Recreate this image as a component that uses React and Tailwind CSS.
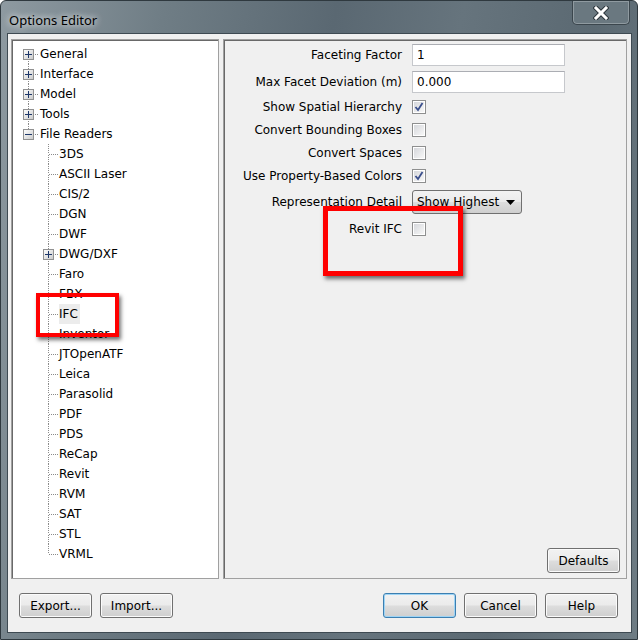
import React from "react";

const topItems = ["General", "Interface", "Model", "Tools"];
const readers = [
  "3DS",
  "ASCII Laser",
  "CIS/2",
  "DGN",
  "DWF",
  "DWG/DXF",
  "Faro",
  "FBX",
  "IFC",
  "Inventor",
  "JTOpenATF",
  "Leica",
  "Parasolid",
  "PDF",
  "PDS",
  "ReCap",
  "Revit",
  "RVM",
  "SAT",
  "STL",
  "VRML",
];

const font = "font-['DejaVu_Sans',sans-serif] text-[12px]";

// dotted tree connector, 20x20, with optional expand box
const Connector = ({ box, up = true, down = true }) => (
  <svg width="20" height="20" className="shrink-0" shapeRendering="crispEdges">
    {up && (
      <line x1="10.5" y1="0" x2="10.5" y2="10" stroke="#8a8a8a" strokeDasharray="1 1" />
    )}
    {down && (
      <line x1="10.5" y1="11" x2="10.5" y2="20" stroke="#8a8a8a" strokeDasharray="1 1" />
    )}
    <line x1="11" y1="10.5" x2="20" y2="10.5" stroke="#8a8a8a" strokeDasharray="1 1" />
    {box && (
      <g>
        <defs>
          <linearGradient id="bx" x1="0" y1="0" x2="1" y2="1">
            <stop offset="0" stopColor="#ffffff" />
            <stop offset="1" stopColor="#c9c9c9" />
          </linearGradient>
        </defs>
        <rect x="5.5" y="5.5" width="10" height="10" fill="url(#bx)" stroke="#919191" />
        <line x1="7" y1="10.5" x2="14" y2="10.5" stroke="#1d3769" />
        {box === "plus" && (
          <line x1="10.5" y1="7" x2="10.5" y2="14" stroke="#1d3769" />
        )}
      </g>
    )}
  </svg>
);

const Check = ({ checked }) => (
  <div className="w-[14px] h-[14px] border border-[#8e8f8f] bg-white p-[1px]">
    <div className="w-full h-full bg-gradient-to-br from-[#d6d8dc] to-[#f7f7f7] relative">
      {checked && (
        <svg width="12" height="12" viewBox="0 0 12 12" className="absolute -left-[1px] -top-[1px]">
          <path d="M2.5 6 L5 9 L9.5 2" fill="none" stroke="#3a4f8c" strokeWidth="1.8" />
        </svg>
      )}
    </div>
  </div>
);

const Btn = ({ children, primary }) => (
  <button
    className={`w-[73px] h-[25px] rounded-[3px] border ${
      primary
        ? "border-[#3c7fb1] shadow-[inset_0_0_0_1px_#9ed4f5]"
        : "border-[#707070] shadow-[inset_0_0_0_1px_#fbfbfb]"
    } bg-[linear-gradient(#f2f2f2_0%,#ebebeb_48%,#dddddd_52%,#cfcfcf_100%)] text-black ${font} flex items-center justify-center`}
  >
    {children}
  </button>
);

const Row = ({ label, children, h = "h-[23px]" }) => (
  <div className={`flex items-center ${h}`}>
    <div className="w-[178px] text-right text-black whitespace-nowrap">{label}</div>
    <div className="ml-[10px] flex items-center">{children}</div>
  </div>
);

const Input = ({ value }) => (
  <div className="w-[153px] h-[22px] bg-white border border-[#c6c8cc] border-t-[#abadb3] flex items-center px-[4px] text-black">
    {value}
  </div>
);

export default function App() {
  return (
    <div className="relative w-[638px] h-[640px] flex flex-col rounded-t-[6px] border border-[#2f393f] bg-[linear-gradient(100deg,#8e9aa1_0%,#6f7d85_22%,#5a6872_45%,#66747d_62%,#5b6972_80%,#6e7c84_100%)] overflow-hidden">
      {/* title bar */}
      <div className="h-[32px] flex items-start justify-between shrink-0">
        <div className="pl-[8px] pt-[10px] font-['Noto_Sans',sans-serif] text-[13px] leading-[18px] text-black [text-shadow:0_0_6px_rgba(255,255,255,0.9),0_0_10px_rgba(255,255,255,0.6)]">
          Options Editor
        </div>
        <div className="mr-[7px] w-[58px] h-[24px] rounded-b-[5px] border border-t-0 border-[#3b464d] bg-[#6a7880] shadow-[inset_0_0_0_1px_rgba(255,255,255,0.25)] flex items-center justify-center">
          <svg width="16" height="14" viewBox="0 0 16 14">
            <path d="M3 2 L13 12 M13 2 L3 12" stroke="#2d363c" strokeWidth="5" strokeLinecap="square" />
            <path d="M3 2 L13 12 M13 2 L3 12" stroke="#ffffff" strokeWidth="3" strokeLinecap="square" />
          </svg>
        </div>
      </div>

      {/* client area */}
      <div className={`ml-[6px] mr-[5px] mb-[6px] flex-1 flex flex-col bg-[#f0f0f0] border border-[#3e4a52] ${font}`}>
        <div className="flex gap-[4px] pl-[3px] pr-[4px] pt-[5px] h-[546px]">
          {/* tree */}
          <div className="w-[208px] h-[540px] bg-white border border-[#a0a0a0] shadow-[inset_1px_1px_0_#696969] pt-[4px] pl-[6px]">
            {topItems.map((t, i) => (
              <div key={t} className="flex items-center h-[20px]">
                <Connector box="plus" up={i > 0} down />
                <span className="ml-[2px] text-black">{t}</span>
              </div>
            ))}
            <div className="flex items-center h-[20px]">
              <Connector box="minus" down={false} />
              <span className="ml-[2px] text-black">File Readers</span>
            </div>
            {readers.map((r, i) => (
              <div key={r} className="flex items-center h-[20px]">
                <div className="w-[20px] shrink-0" />
                <Connector
                  box={r === "DWG/DXF" ? "plus" : null}
                  down={i < readers.length - 1}
                />
                <span
                  className={`ml-[1px] text-black leading-[20px] ${
                    r === "IFC" ? "bg-[#ececec] pr-[2px]" : ""
                  }`}
                >
                  {r}
                </span>
              </div>
            ))}
          </div>

          {/* options */}
          <div className="w-[404px] h-[540px] border border-[#a0a0a0] shadow-[inset_1px_1px_0_#696969] flex flex-col pt-[4px]">
            <Row label="Faceting Factor" h="h-[22px]">
              <Input value="1" />
            </Row>
            <div className="h-[5px]" />
            <Row label="Max Facet Deviation (m)" h="h-[22px]">
              <Input value="0.000" />
            </Row>
            <div className="h-[2px]" />
            <Row label="Show Spatial Hierarchy">
              <Check checked />
            </Row>
            <Row label="Convert Bounding Boxes">
              <Check />
            </Row>
            <Row label="Convert Spaces">
              <Check />
            </Row>
            <Row label="Use Property-Based Colors">
              <Check checked />
            </Row>
            <div className="h-[3px]" />
            <Row label="Representation Detail" h="h-[24px]">
              <div className="w-[110px] h-[24px] rounded-[3px] border border-[#707070] bg-[linear-gradient(#f2f2f2_0%,#ebebeb_48%,#dddddd_52%,#cfcfcf_100%)] flex items-center justify-between pl-[4px] pr-[6px] text-black">
                <span>Show Highest</span>
                <svg width="9" height="5" viewBox="0 0 9 5">
                  <path d="M0 0 H9 L4.5 5 Z" fill="#000" />
                </svg>
              </div>
            </Row>
            <div className="h-[3px]" />
            <Row label="Revit IFC" h="h-[24px]">
              <Check />
            </Row>
            <div className="flex-1" />
            <div className="flex justify-end pr-[6px] pb-[5px]">
              <Btn>Defaults</Btn>
            </div>
          </div>
        </div>

        {/* bottom buttons */}
        <div className="flex items-center justify-between pl-[11px] pr-[13px] mt-[13px]">
          <div className="flex gap-[8px]">
            <Btn>Export...</Btn>
            <Btn>Import...</Btn>
          </div>
          <div className="flex gap-[8px]">
            <Btn primary>OK</Btn>
            <Btn>Cancel</Btn>
            <Btn>Help</Btn>
          </div>
        </div>
      </div>

      {/* red annotation boxes */}
      <div className="absolute left-[35px] top-[292px] w-[83px] h-[44px] border-[4px] border-[#ff0000] shadow-[2px_3px_4px_rgba(0,0,0,0.55)]" />
      <div className="absolute left-[322px] top-[205px] w-[140px] h-[70px] border-[5px] border-[#ff0000] shadow-[2px_3px_4px_rgba(0,0,0,0.55)]" />
    </div>
  );
}
